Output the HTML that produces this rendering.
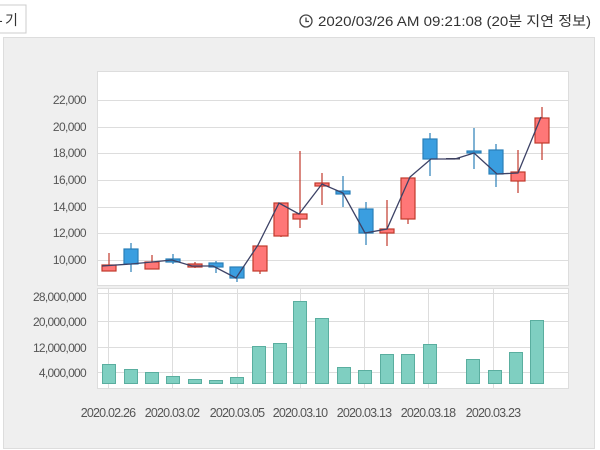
<!DOCTYPE html>
<html><head><meta charset="utf-8"><style>
body{margin:0;width:600px;height:450px;overflow:hidden;background:#fff;font-family:"Liberation Sans","Noto Sans CJK KR",sans-serif;}
</style></head><body>
<svg width="600" height="450" xmlns="http://www.w3.org/2000/svg" style="position:absolute;left:0;top:0">
<rect x="-10" y="5" width="36" height="28" fill="#fff" stroke="#ccc"/>
<text x="5" y="25" font-size="14" fill="#333" font-family="Noto Sans CJK KR, sans-serif">기</text>
<text x="-2" y="25" font-size="14" fill="#333">-</text>
<circle cx="306" cy="21" r="6" fill="none" stroke="#444" stroke-width="1.3"/>
<path d="M306 17.5V21.5H309" fill="none" stroke="#444" stroke-width="1.3"/>
<text x="318" y="26" font-size="14" fill="#333" textLength="273" lengthAdjust="spacingAndGlyphs" font-family="Liberation Sans, Noto Sans CJK KR, sans-serif">2020/03/26 AM 09:21:08 (20분 지연 정보)</text>
<rect x="3.5" y="37.5" width="591" height="411" fill="#efefef" stroke="#ddd"/>
<rect x="97.5" y="71.5" width="471" height="214" fill="#fff" stroke="#ddd"/>
<g stroke="#ddd" stroke-width="1">
<path d="M97 100.5H568M97 127.5H568M97 153.5H568M97 180.5H568M97 207.5H568M97 233.5H568M97 260.5H568"/>
</g>
<g font-size="12" fill="#555" text-anchor="end" letter-spacing="-0.6">
<text x="86" y="104">22,000</text><text x="86" y="131">20,000</text><text x="86" y="157">18,000</text><text x="86" y="184">16,000</text><text x="86" y="211">14,000</text><text x="86" y="237">12,000</text><text x="86" y="264">10,000</text>
</g>
<g stroke-width="1.2">
<g stroke="#c0392b" fill="#f77">
<line x1="109" y1="253" x2="109" y2="271"/><rect x="102" y="265" width="14" height="6"/>
<line x1="152" y1="255" x2="152" y2="269"/><rect x="145" y="262" width="14" height="7"/>
<line x1="195" y1="262" x2="195" y2="268"/><rect x="188" y="264" width="14" height="3"/>
<line x1="260" y1="246" x2="260" y2="274"/><rect x="253" y="246" width="14" height="25"/>
<line x1="281" y1="203" x2="281" y2="237"/><rect x="274" y="203" width="14" height="33"/>
<line x1="300" y1="151" x2="300" y2="228"/><rect x="293" y="214" width="14" height="5"/>
<line x1="322" y1="173" x2="322" y2="205"/><rect x="315" y="183" width="14" height="3"/>
<line x1="387" y1="200" x2="387" y2="246"/><rect x="380" y="229" width="14" height="4"/>
<line x1="408" y1="178" x2="408" y2="224"/><rect x="401" y="178" width="14" height="41"/>
<line x1="518" y1="150" x2="518" y2="193"/><rect x="511" y="172" width="14" height="9"/>
<line x1="542" y1="107" x2="542" y2="160"/><rect x="535" y="118" width="14" height="25"/>
</g>
<g stroke="#2a7fb8" fill="#3a9ee0">
<line x1="131" y1="243" x2="131" y2="272"/><rect x="124" y="249" width="14" height="15"/>
<line x1="173" y1="254" x2="173" y2="264"/><rect x="166" y="259" width="14" height="3"/>
<line x1="216" y1="261" x2="216" y2="273"/><rect x="209" y="263" width="14" height="4"/>
<line x1="237" y1="267" x2="237" y2="282"/><rect x="230" y="267" width="14" height="11"/>
<line x1="343" y1="176" x2="343" y2="207"/><rect x="336" y="191" width="14" height="3"/>
<line x1="366" y1="202" x2="366" y2="245"/><rect x="359" y="209" width="14" height="24"/>
<line x1="430" y1="133" x2="430" y2="176"/><rect x="423" y="139" width="14" height="20"/>
<line x1="474" y1="128" x2="474" y2="169"/><rect x="467" y="151" width="14" height="2"/>
<line x1="496" y1="144" x2="496" y2="187"/><rect x="489" y="150" width="14" height="24"/>
</g>
<rect x="446" y="158" width="14" height="1.5" fill="#445" stroke="none"/>
</g>
<polyline fill="none" stroke="#3d4266" stroke-width="1.3" points="102,266 131,264 152,262 172,260 192,266 213,266 236,278 258,245 279,203 299,214 322,184 343,193 365,233 387,229 410,177 431,159 455,159 474,153 497,174 518,173 541,117"/>
<rect x="97.5" y="288.5" width="471" height="100" fill="#fff" stroke="#ddd"/>
<g stroke="#ddd">
<path d="M97 293.5H568M97 321.5H568M97 347.5H568M97 372.5H568"/>
<path d="M108.5 288V388M172.5 288V388M237.5 288V388M300.5 288V388M364.5 288V388M428.5 288V388M493.5 288V388"/>
</g>
<g font-size="12" fill="#555" text-anchor="end" letter-spacing="-0.7">
<text x="86" y="301">28,000,000</text><text x="86" y="326">20,000,000</text><text x="86" y="352">12,000,000</text><text x="86" y="377">4,000,000</text>
</g>
<g fill="#7fcfc1" stroke="#5aae9f">
<rect x="102.5" y="364.5" width="13" height="19"/>
<rect x="124.5" y="369.5" width="13" height="14"/>
<rect x="145.5" y="372.5" width="13" height="11"/>
<rect x="166.5" y="376.5" width="13" height="7"/>
<rect x="188.5" y="379.5" width="13" height="4"/>
<rect x="209.5" y="380.5" width="13" height="3"/>
<rect x="230.5" y="377.5" width="13" height="6"/>
<rect x="252.5" y="346.5" width="13" height="37"/>
<rect x="273.5" y="343.5" width="13" height="40"/>
<rect x="293.5" y="301.5" width="13" height="82"/>
<rect x="315.5" y="318.5" width="13" height="65"/>
<rect x="337.5" y="367.5" width="13" height="16"/>
<rect x="358.5" y="370.5" width="13" height="13"/>
<rect x="380.5" y="354.5" width="13" height="29"/>
<rect x="401.5" y="354.5" width="13" height="29"/>
<rect x="423.5" y="344.5" width="13" height="39"/>
<rect x="466.5" y="359.5" width="13" height="24"/>
<rect x="488.5" y="370.5" width="13" height="13"/>
<rect x="509.5" y="352.5" width="13" height="31"/>
<rect x="530.5" y="320.5" width="13" height="63"/>
</g>
<g font-size="12.5" fill="#555" text-anchor="middle" letter-spacing="-0.8">
<text x="108" y="417">2020.02.26</text><text x="172" y="417">2020.03.02</text><text x="237" y="417">2020.03.05</text><text x="300" y="417">2020.03.10</text><text x="364" y="417">2020.03.13</text><text x="428" y="417">2020.03.18</text><text x="493" y="417">2020.03.23</text>
</g>
</svg>
</body></html>
